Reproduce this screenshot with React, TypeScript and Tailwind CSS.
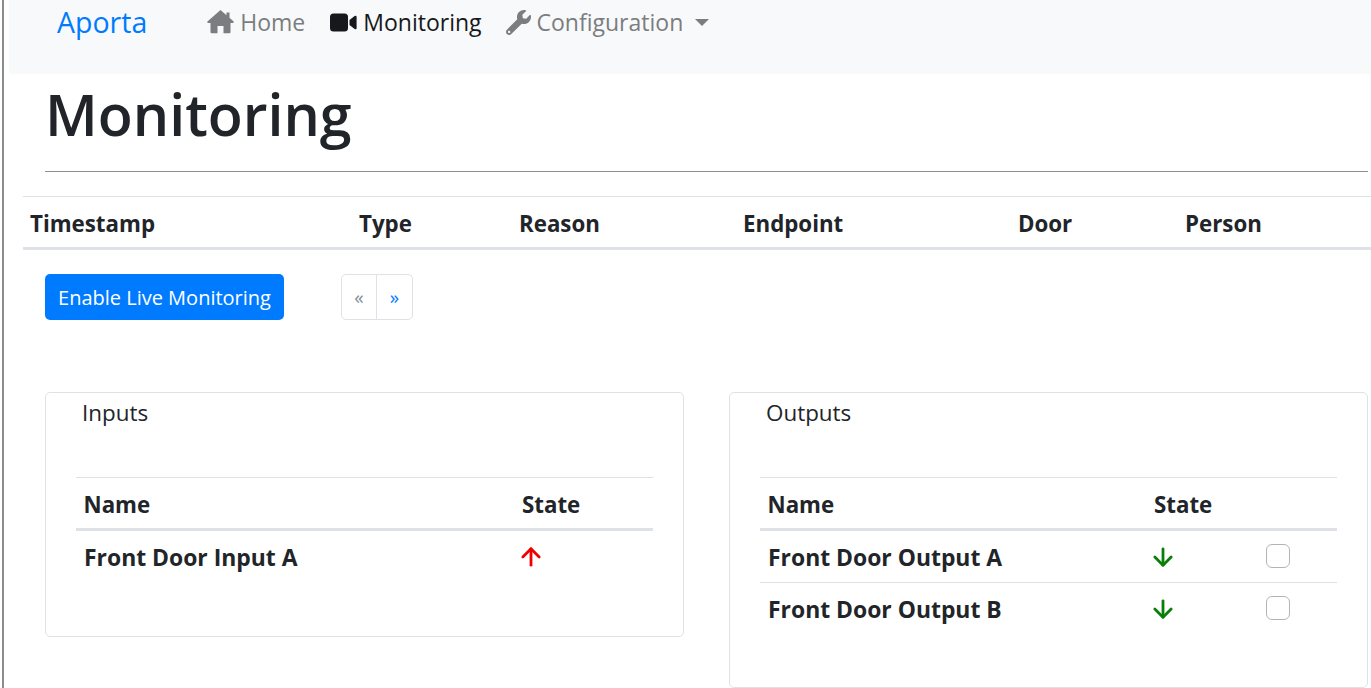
import { FaWrench } from "react-icons/fa";
import { ArrowDown, ArrowUp } from "lucide-react";

const eventColumns = [
  { label: "Timestamp", width: "w-[328px] pl-[7px]" },
  { label: "Type", width: "w-[160px] pl-2" },
  { label: "Reason", width: "w-[224px] pl-2" },
  { label: "Endpoint", width: "w-[275px] pl-2" },
  { label: "Door", width: "w-[167px] pl-2" },
  { label: "Person", width: "pl-2" },
];

function HomeIcon() {
  return (
    <svg width="27" height="25" viewBox="0 0 27 25" className="-mt-[2px] text-[#7b7d80] fill-current">
      <path d="M13.5 1 L19.5 6.2 V3.5 H22.5 V8.8 L26.6 12.4 Q27.2 13.6 26 14 H23.5 V23 Q23.5 24.2 22.3 24.2 H16.5 V17 H10.5 V24.2 H4.7 Q3.5 24.2 3.5 23 V14 H1 Q-.2 13.6 .4 12.4 Z" />
    </svg>
  );
}

function VideoIcon() {
  return (
    <svg width="28" height="19" viewBox="0 0 28 19" className="text-[#16181b] fill-current">
      <rect x="1" y="0.5" width="18" height="18" rx="3.5" />
      <path d="M20.5 7 L25.6 3 Q27.6 2.2 27.6 4 V15 Q27.6 16.8 25.6 16 L20.5 12 Z" />
    </svg>
  );
}

function NavItem({ icon, label, active }: { icon: React.ReactNode; label: string; active?: boolean }) {
  return (
    <a className={`flex items-center gap-[6px] ${active ? "text-[#16181b]" : "text-[#7b7d80]"}`}>
      {icon}
      <span>{label}</span>
    </a>
  );
}

function IoCard({
  title,
  rows,
  height,
  gutter,
}: {
  title: string;
  rows: { name: string; up?: boolean; check?: boolean }[];
  height: string;
  gutter: string;
}) {
  return (
    <fieldset className={`w-[639px] ${height} border border-[#dee2e6] rounded-[5px] pl-[30px] pr-[30px]`}>
      <div className="pl-[6px] pt-[6px] h-[84px] text-[22.4px] leading-[28px] text-[#212529]">{title}</div>
      <table className="w-full border-collapse text-[22.9px] font-bold text-[#212529]">
        <thead>
          <tr className="h-[52px] text-[22.3px] border-t border-[#dee2e6] border-b-[3px] border-b-[#dee2e6]">
            <th className={`text-left pl-[7.5px] pt-[3px] ${gutter}`}>Name</th>
            <th className="text-left pt-[3px]">State</th>
            {rows[0]?.check && <th className="w-[82px]" />}
          </tr>
        </thead>
        <tbody>
          {rows.map((row, i) => (
            <tr key={row.name} className={`${i > 0 ? "h-[52px] border-t border-[#dee2e6]" : "h-[53px]"}`}>
              <td className="pl-2 pt-[3px]">{row.name}</td>
              <td>
                {row.up ? (
                  <ArrowUp size={28} strokeWidth={2.4} className="text-[#f00000] -ml-[5px]" />
                ) : (
                  <ArrowDown size={28} strokeWidth={2.4} className="text-[#088008] -ml-[5px]" />
                )}
              </td>
              {row.check && (
                <td>
                  <input
                    type="checkbox"
                    className="block appearance-none w-6 h-6 -mt-[2px] rounded-[6px] border border-[#b4b4b4] bg-white ml-[11px]"
                  />
                </td>
              )}
            </tr>
          ))}
        </tbody>
      </table>
    </fieldset>
  );
}

export default function App() {
  return (
    <div className="flex h-[688px] overflow-hidden bg-white font-['Open_Sans',sans-serif]">
      {/* window edge */}
      <div className="w-[9px] shrink-0 bg-white">
        <div className="ml-[2px] w-[2px] h-full bg-[#8c8c8c]" />
      </div>

      <main className="flex-1 min-w-0">
        <nav className="h-[74px] bg-[#f8f9fa] flex items-start pt-[4px] pl-[48px] text-[23px] leading-[36px]">
          <a className="text-[28.5px] text-[#007bff] mr-[60px]">Aporta</a>
          <div className="flex gap-[24px]">
            <NavItem icon={<HomeIcon />} label="Home" />
            <NavItem icon={<VideoIcon />} label="Monitoring" active />
            <NavItem icon={<FaWrench size={25} className="text-[#7b7d80]" />} label="Configuration" />
          </div>
          <span className="ml-[12px] mt-[15px] border-x-[7px] border-x-transparent border-t-[7px] border-t-[#7b7d80]" />
        </nav>

        <div className="pl-[36px] pr-[3px]">
          <h1 className="text-[57.3px] leading-[80px] font-semibold text-[#212529]">Monitoring</h1>
          <hr className="mt-[17px] border-[#8f8f8f]" />
        </div>

        <table className="ml-[14px] mt-[24px] w-[1348px] table-fixed border-collapse text-[22.3px] font-bold text-[#212529]">
          <thead>
            <tr className="h-[52px] border-t border-[#dee2e6] border-b-[3px] border-b-[#dee2e6]">
              {eventColumns.map((col) => (
                <th key={col.label} className={`text-left pt-[3px] ${col.width}`}>
                  {col.label}
                </th>
              ))}
            </tr>
          </thead>
        </table>

        <div className="pl-[36px] pt-[24px] flex gap-[57px]">
          <button className="w-[239px] h-[46px] pt-[1px] rounded-[5px] bg-[#007bff] text-white text-[20px]">
            Enable Live Monitoring
          </button>
          <div className="flex w-[72px] h-[46px] border border-[#dee2e6] rounded-[5px] text-[19px]">
            <span className="w-[35px] flex items-center justify-center border-r border-[#dee2e6] text-[#868e96]">«</span>
            <span className="flex-1 flex items-center justify-center text-[#007bff]">»</span>
          </div>
        </div>

        <div className="pl-[36px] pt-[72px] flex items-start gap-[45px]">
          <IoCard
            title="Inputs"
            height="h-[245px]"
            gutter="w-[446px]"
            rows={[{ name: "Front Door Input A", up: true }]}
          />
          <IoCard
            title="Outputs"
            height="h-[296px]"
            gutter="w-[394px]"
            rows={[
              { name: "Front Door Output A", check: true },
              { name: "Front Door Output B", check: true },
            ]}
          />
        </div>
      </main>
    </div>
  );
}
